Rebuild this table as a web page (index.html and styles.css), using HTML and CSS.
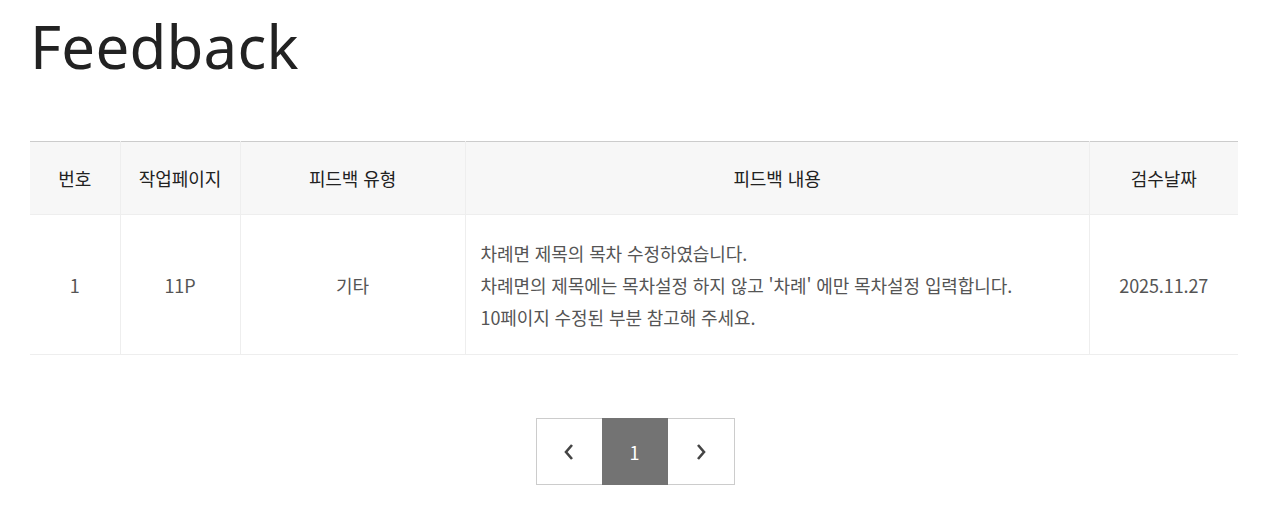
FILE: index.html
```html
<!DOCTYPE html>
<html lang="ko">
<head>
  <meta charset="UTF-8">
  <meta name="viewport" content="width=device-width, initial-scale=1.0">
  <title>Feedback</title>
  <link rel="stylesheet" href="styles.css">
</head>
<body>
  <div class="wrap">
    <h1 class="title">Feedback</h1>

    <table class="board">
      <colgroup>
        <col class="c-no">
        <col class="c-page">
        <col class="c-type">
        <col class="c-text">
        <col class="c-date">
      </colgroup>
      <thead>
        <tr>
          <th>번호</th>
          <th>작업페이지</th>
          <th>피드백 유형</th>
          <th>피드백 내용</th>
          <th>검수날짜</th>
        </tr>
      </thead>
      <tbody>
        <tr>
          <td>1</td>
          <td>11P</td>
          <td>기타</td>
          <td class="content">차례면 제목의 목차 수정하였습니다.<br>차례면의 제목에는 목차설정 하지 않고 '차례' 에만 목차설정 입력합니다.<br>10페이지 수정된 부분 참고해 주세요.</td>
          <td>2025.11.27</td>
        </tr>
      </tbody>
    </table>

    <div class="paging">
      <a class="prev" href="#">
        <svg width="16" height="22" viewBox="0 0 16 22"><path d="M11 4 L5 11 L11 18" fill="none" stroke="#444" stroke-width="2.6"/></svg>
      </a>
      <a class="on" href="#">1</a>
      <a class="next" href="#">
        <svg width="16" height="22" viewBox="0 0 16 22"><path d="M5 4 L11 11 L5 18" fill="none" stroke="#444" stroke-width="2.6"/></svg>
      </a>
    </div>
  </div>
</body>
</html>
```

FILE: styles.css
```css
body {
  margin: 0;
  padding: 0;
  font-family: "Noto Sans CJK KR", "Noto Sans", sans-serif;
  color: #222;
  background: #fff;
}
.wrap {
  padding: 0 28px 0 30px;
}
.title {
  margin: 0;
  padding-top: 6px;
  font-family: "Noto Sans", "Noto Sans CJK KR", sans-serif;
  font-size: 60px;
  font-weight: 400;
  line-height: 80px;
  letter-spacing: 0.2px;
  color: #222;
}
.board {
  width: 100%;
  margin-top: 55px;
  border-collapse: collapse;
  table-layout: fixed;
  border-top: 1px solid #ccc;
  font-size: 18px;
  letter-spacing: -0.1px;
}
.c-no { width: 90px; }
.c-page { width: 120px; }
.c-type { width: 225px; }
.c-text { width: 624px; }
.c-date { width: 149px; }
.board th {
  height: 72px;
  padding: 0;
  background: #f7f7f7;
  font-weight: 400;
  color: #222;
  border-left: 1px solid #eee;
  border-bottom: 1px solid #eee;
}
.board td {
  height: 139px;
  padding: 0;
  text-align: center;
  color: #555;
  border-left: 1px solid #eee;
  border-bottom: 1px solid #eee;
}
.board th:first-child,
.board td:first-child {
  border-left: none;
}
.board td.content {
  text-align: left;
  padding-left: 15px;
  line-height: 32px;
}
.paging {
  display: flex;
  justify-content: center;
  margin-top: 63px;
  padding-left: 2px;
}
.paging a {
  display: flex;
  justify-content: center;
  align-items: center;
  width: 66px;
  height: 67px;
  box-sizing: border-box;
  border: 1px solid #ccc;
  color: #444;
  text-decoration: none;
  font-size: 18px;
}
.paging .prev { border-right: none; }
.paging .next { border-left: none; width: 67px; }
.paging .on {
  background: #737373;
  border-color: #737373;
  color: #fff;
}
```
